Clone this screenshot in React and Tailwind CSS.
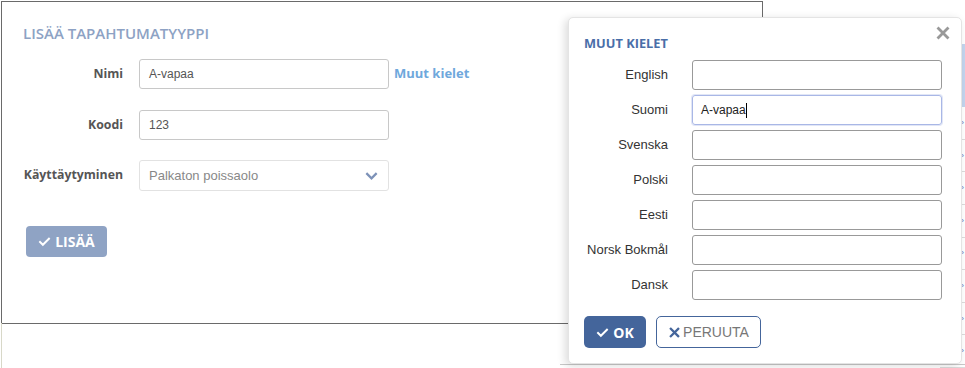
import React from "react";

const Check = ({ className }) => (
  <svg viewBox="0 0 16 16" className={className} fill="none" stroke="currentColor" strokeWidth="2.4" strokeLinecap="square">
    <path d="M2.5 8.5l3.5 3.5 7.5-7.5" />
  </svg>
);

const Cross = ({ className }) => (
  <svg viewBox="0 0 16 16" className={className} fill="none" stroke="currentColor" strokeWidth="2.8" strokeLinecap="square">
    <path d="M3.5 3.5l9 9M12.5 3.5l-9 9" />
  </svg>
);

const langs = [
  ["English", ""],
  ["Suomi", "A-vapaa"],
  ["Svenska", ""],
  ["Polski", ""],
  ["Eesti", ""],
  ["Norsk Bokmål", ""],
  ["Dansk", ""],
];

export default function App() {
  const open = { fontFamily: '"Open Sans", "Liberation Sans", sans-serif' };
  const arial = { fontFamily: '"Liberation Sans", Arial, sans-serif' };
  return (
    <div className="relative w-[965px] h-[368px] bg-white overflow-hidden">
      {/* left edge line below panel */}
      <div className="absolute left-px top-[323px] w-px h-[45px] bg-[#d8d8c8]" />

      {/* background table on the right */}
      <div className="absolute left-[940px] top-[44px] w-[25px] h-[324px] flex flex-col">
        <div className="h-[66px] bg-[#c3d5ee]" />
        {Array.from({ length: 8 }).map((_, i) => (
          <div key={i} className="h-[34px] border-b border-[#dcdcdc] flex items-center justify-end pr-[1px]">
            <span className="text-[8px] text-[#6677bb]" style={arial}>»</span>
          </div>
        ))}
      </div>
      <div className="absolute left-[560px] top-[364px] w-[405px] h-px bg-[#c8c8c8]" />

      {/* main panel */}
      <div className="ml-px mt-px w-[762px] h-[323px] border border-[#6a6a6a] bg-white px-[21px] pt-[21px]" style={open}>
        <h2 className="text-[15px] leading-[20px] font-semibold text-[#8da2c4]">
          LISÄÄ TAPAHTUMATYYPPI
        </h2>
        <div className="mt-[16px] flex flex-col">
          <div className="flex items-center h-[30px]">
            <label className="w-[100px] text-right text-[12.3px] font-bold text-[#555]">Nimi</label>
            <div className="ml-[16px] w-[250px] h-[30px] border border-[#c8c8c8] rounded-[3px] flex items-center px-[9px] text-[12px] text-[#555]" style={arial}>
              A-vapaa
            </div>
            <span className="ml-[5px] text-[13px] font-bold text-[#6fa8dc]">Muut kielet</span>
          </div>
          <div className="mt-[21px] flex items-center h-[30px]">
            <label className="w-[100px] text-right text-[12.3px] font-bold text-[#555]">Koodi</label>
            <div className="ml-[16px] w-[250px] h-[30px] border border-[#c8c8c8] rounded-[3px] flex items-center px-[9px] text-[12px] text-[#555]" style={arial}>
              123
            </div>
          </div>
          <div className="mt-[20px] flex items-center h-[31px]">
            <label className="w-[100px] text-right text-[12.3px] font-bold text-[#555]">Käyttäytyminen</label>
            <div className="ml-[16px] w-[250px] h-[31px] border border-[#e2e2e2] rounded-[3px] flex items-center justify-between pl-[9px] pr-[9px] text-[13px] text-[#888]" style={arial}>
              <span>Palkaton poissaolo</span>
              <svg viewBox="0 0 16 16" className="w-[15px] h-[15px] text-[#7d92b8]" fill="none" stroke="currentColor" strokeWidth="2.4">
                <path d="M2.5 5.5l5.5 5.5 5.5-5.5" />
              </svg>
            </div>
          </div>
        </div>
        <button className="mt-[35px] ml-[3px] w-[81px] h-[31px] rounded-[4px] bg-[#8fa3c4] text-white text-[14px] font-bold flex items-center justify-center gap-[4px]">
          <Check className="w-[13px] h-[13px]" />
          LISÄÄ
        </button>
      </div>

      {/* popup */}
      <div className="absolute left-[568px] top-[17px] w-[394px] h-[347px] bg-white rounded-[5px] border border-[#e4e4e4] shadow-[-3px_2px_8px_rgba(0,0,0,0.14)] pl-[15px] pt-[16px]">
        <button className="absolute right-[10px] top-[7px] text-[#999]">
          <Cross className="w-[16px] h-[16px]" />
        </button>
        <h3 className="text-[12.8px] leading-[18px] font-bold text-[#4a6ea8]" style={open}>MUUT KIELET</h3>
        <div className="mt-[8px] flex flex-col gap-[5px]">
          {langs.map(([l, v]) => (
            <div key={l} className="flex items-center h-[30px]">
              <label className="w-[84px] text-right text-[13px] text-[#333]" style={arial}>{l}</label>
              <div
                className={
                  "ml-[24px] w-[250px] h-[30px] rounded-[3px] border flex items-center px-[8px] text-[12px] text-[#222] " +
                  (v ? "border-[#a9b7e6] shadow-[0_0_0_1px_rgba(169,183,230,0.35)]" : "border-[#999]")
                }
                style={arial}
              >
                {v}
                {v && <span className="w-px h-[15px] bg-black" />}
              </div>
            </div>
          ))}
        </div>
        <div className="mt-[16px] flex gap-[10px]">
          <button className="w-[62px] h-[32px] rounded-[5px] bg-[#44659b] text-white text-[14px] font-bold flex items-center justify-center gap-[4px]" style={open}>
            <Check className="w-[13px] h-[13px]" />
            OK
          </button>
          <button className="relative w-[105px] h-[32px] rounded-[5px] border border-[#44659b] bg-white text-[#777] text-[14px] flex items-center justify-center gap-[2px]" style={arial}>
            <Cross className="w-[13px] h-[13px] text-[#44659b]" />
            PERUUTA
          </button>
        </div>
      </div>
    </div>
  );
}
